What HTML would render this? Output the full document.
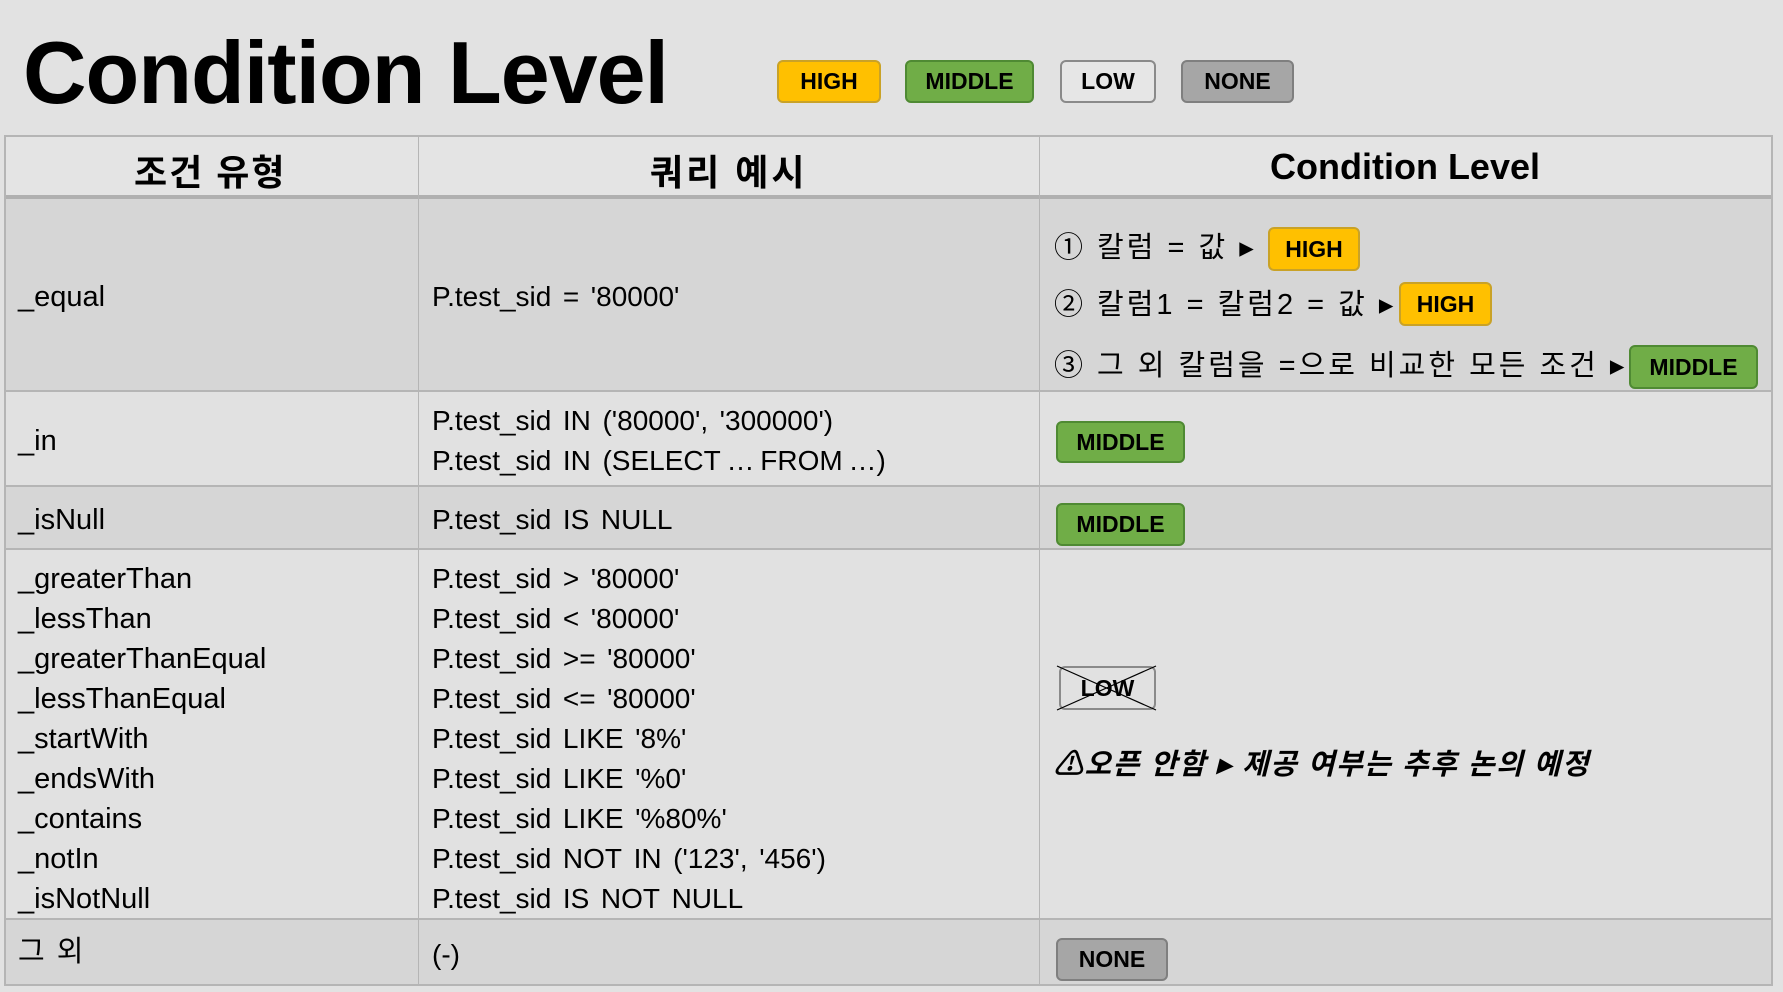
<!DOCTYPE html>
<html><head><meta charset="utf-8"><style>
*{margin:0;padding:0;box-sizing:border-box}
body{width:1783px;height:992px;background:#e2e2e2;font-family:"Liberation Sans","Noto Sans CJK KR",sans-serif;position:relative;overflow:hidden;color:#000}
.a{position:absolute;white-space:nowrap}
.b{position:absolute;border-radius:6px;font-weight:bold;font-size:23px;display:flex;align-items:center;justify-content:center;border:2px solid}
.H{background:#ffc000;border-color:#c9a227}
.M{background:#70ad47;border-color:#4f8a33}
.L{background:#e6e6e6;border-color:#8a8a8a}
.N{background:#a6a6a6;border-color:#7f7f7f}
.t{font-size:29px;line-height:40px}
.q{font-size:28px;line-height:40px;word-spacing:-2px}
.k{letter-spacing:3px}
.hd{font-size:36px;font-weight:bold}
</style></head><body>
<div class="a" style="left:23px;top:22px;font-size:88px;font-weight:bold;letter-spacing:-1px">Condition Level</div>
<div class="b H" style="left:777px;top:60px;width:104px;height:43px">HIGH</div>
<div class="b M" style="left:905px;top:60px;width:129px;height:43px">MIDDLE</div>
<div class="b L" style="left:1060px;top:60px;width:96px;height:43px">LOW</div>
<div class="b N" style="left:1181px;top:60px;width:113px;height:43px">NONE</div>

<div class="a" style="left:5px;top:135px;width:1767px;height:64px;background:#e4e4e4;border-top:2px solid #b5b5b5;border-bottom:4px solid #b0b0b0"></div>
<div class="a" style="left:5px;top:199px;width:1767px;height:193px;background:#d6d6d6;border-bottom:2px solid #b5b5b5"></div>
<div class="a" style="left:5px;top:392px;width:1767px;height:95px;background:#e1e1e1;border-bottom:2px solid #b5b5b5"></div>
<div class="a" style="left:5px;top:487px;width:1767px;height:63px;background:#d6d6d6;border-bottom:2px solid #b5b5b5"></div>
<div class="a" style="left:5px;top:550px;width:1767px;height:370px;background:#e1e1e1;border-bottom:2px solid #b5b5b5"></div>
<div class="a" style="left:5px;top:920px;width:1767px;height:66px;background:#d6d6d6;border-bottom:2px solid #b5b5b5"></div>
<div class="a" style="left:4px;top:135px;width:2px;height:851px;background:#b5b5b5"></div>
<div class="a" style="left:418px;top:135px;width:1px;height:851px;background:#b5b5b5"></div>
<div class="a" style="left:1039px;top:135px;width:1px;height:851px;background:#b5b5b5"></div>
<div class="a" style="left:1771px;top:135px;width:2px;height:851px;background:#b5b5b5"></div>

<div class="a hd" style="left:134px;top:144px;letter-spacing:2px">조건 유형</div>
<div class="a hd" style="left:650px;top:144px;letter-spacing:3px">쿼리 예시</div>
<div class="a hd" style="left:1270px;top:146px">Condition Level</div>

<div class="a t" style="left:18px;top:277px">_equal</div>
<div class="a q" style="left:432px;top:277px">P.test_sid&nbsp; = &nbsp;'80000'</div>
<div class="a t k" style="left:1054px;top:228px">① 칼럼 = 값 ▸</div>
<div class="b H" style="left:1268px;top:227px;width:92px;height:44px">HIGH</div>
<div class="a t k" style="left:1054px;top:285px">② 칼럼1 = 칼럼2 = 값 ▸</div>
<div class="b H" style="left:1399px;top:282px;width:93px;height:44px">HIGH</div>
<div class="a t k" style="left:1054px;top:346px">③ 그 외 칼럼을 =으로 비교한 모든 조건 ▸</div>
<div class="b M" style="left:1629px;top:345px;width:129px;height:44px">MIDDLE</div>

<div class="a t" style="left:18px;top:421px">_in</div>
<div class="a q" style="left:432px;top:401px">P.test_sid&nbsp; IN&nbsp; ('80000',&nbsp; '300000')<br>P.test_sid&nbsp; IN&nbsp; (SELECT&nbsp;…&nbsp;FROM&nbsp;…)</div>
<div class="b M" style="left:1056px;top:421px;width:129px;height:42px">MIDDLE</div>

<div class="a t" style="left:18px;top:500px">_isNull</div>
<div class="a q" style="left:432px;top:500px">P.test_sid&nbsp; IS&nbsp; NULL</div>
<div class="b M" style="left:1056px;top:503px;width:129px;height:43px">MIDDLE</div>

<div class="a t" style="left:18px;top:559px">_greaterThan<br>_lessThan<br>_greaterThanEqual<br>_lessThanEqual<br>_startWith<br>_endsWith<br>_contains<br>_notIn<br>_isNotNull</div>
<div class="a q" style="left:432px;top:559px">P.test_sid&nbsp; &gt;&nbsp; '80000'<br>P.test_sid&nbsp; &lt;&nbsp; '80000'<br>P.test_sid&nbsp; &gt;=&nbsp; '80000'<br>P.test_sid&nbsp; &lt;=&nbsp; '80000'<br>P.test_sid&nbsp; LIKE&nbsp; '8%'<br>P.test_sid&nbsp; LIKE&nbsp; '%0'<br>P.test_sid&nbsp; LIKE&nbsp; '%80%'<br>P.test_sid&nbsp; NOT&nbsp; IN&nbsp; ('123',&nbsp; '456')<br>P.test_sid&nbsp; IS&nbsp; NOT&nbsp; NULL</div>
<div class="b L" style="left:1059px;top:666px;width:97px;height:44px;background:transparent">LOW</div>
<svg class="a" style="left:1055px;top:664px" width="103" height="48"><line x1="2" y1="46" x2="101" y2="2" stroke="#000" stroke-width="1.2"/><line x1="2" y1="2" x2="101" y2="46" stroke="#000" stroke-width="1.2"/></svg>
<div class="a t" style="left:1054px;top:745px;font-weight:bold;font-style:italic;letter-spacing:1.5px">⚠오픈 안함 ▸ 제공 여부는 추후 논의 예정</div>

<div class="a t" style="left:18px;top:932px;letter-spacing:2px">그 외</div>
<div class="a q" style="left:432px;top:935px">(-)</div>
<div class="b N" style="left:1056px;top:938px;width:112px;height:43px">NONE</div>
</body></html>
